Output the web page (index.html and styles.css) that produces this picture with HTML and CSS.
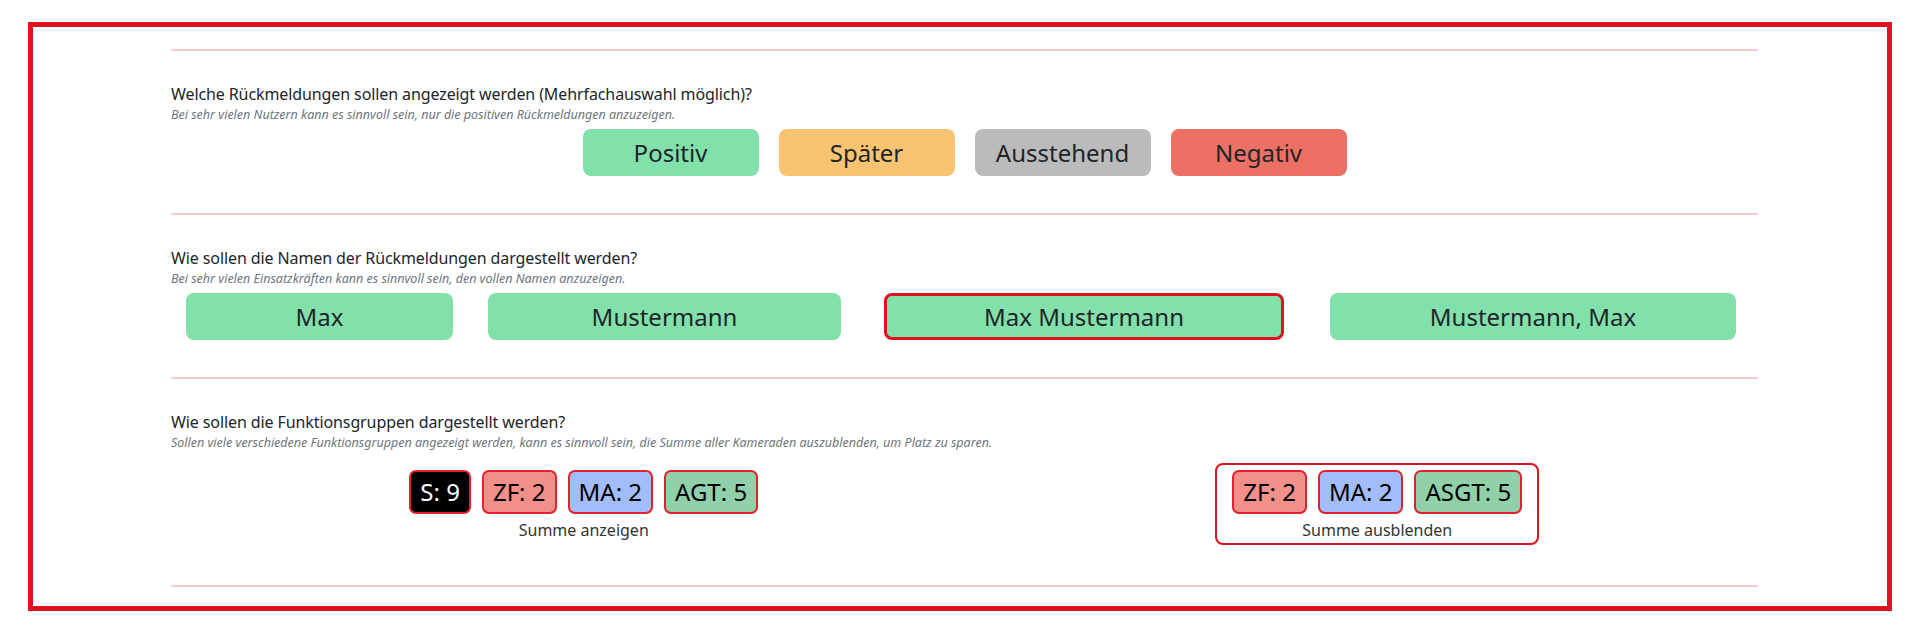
FILE: index.html
```html
<!DOCTYPE html>
<html lang="de">
<head>
  <meta charset="UTF-8">
  <title>Anzeige-Einstellungen</title>
  <link rel="stylesheet" href="styles.css">
</head>

<body>
  <div class="panel">
    <hr class="rule">

    <!-- Welche Rückmeldungen -->
    <section class="option">
      <p class="question">Welche Rückmeldungen sollen angezeigt werden (Mehrfachauswahl möglich)?</p>
      <p class="hint">Bei sehr vielen Nutzern kann es sinnvoll sein, nur die positiven Rückmeldungen anzuzeigen.</p>
      <div class="status-row">
        <button class="btn btn-positive">Positiv</button>
        <button class="btn btn-later">Später</button>
        <button class="btn btn-pending">Ausstehend</button>
        <button class="btn btn-negative">Negativ</button>
      </div>
    </section>

    <hr class="rule">

    <!-- Namensdarstellung -->
    <section class="option">
      <p class="question">Wie sollen die Namen der Rückmeldungen dargestellt werden?</p>
      <p class="hint">Bei sehr vielen Einsatzkräften kann es sinnvoll sein, den vollen Namen anzuzeigen.</p>
      <div class="name-row">
        <button class="btn btn-positive name-first">Max</button>
        <button class="btn btn-positive name-last">Mustermann</button>
        <button class="btn btn-positive name-full selected">Max Mustermann</button>
        <button class="btn btn-positive name-rev">Mustermann, Max</button>
      </div>
    </section>

    <hr class="rule">

    <!-- Funktionsgruppen -->
    <section class="option option-last">
      <p class="question">Wie sollen die Funktionsgruppen dargestellt werden?</p>
      <p class="hint">Sollen viele verschiedene Funktionsgruppen angezeigt werden, kann es sinnvoll sein, die Summe aller Kameraden auszublenden, um Platz zu sparen.</p>
      <div class="group-row">
        <div class="group-cell">
          <div class="group">
            <div class="chips">
              <span class="chip chip-sum">S: 9</span>
              <span class="chip chip-zf">ZF: 2</span>
              <span class="chip chip-ma">MA: 2</span>
              <span class="chip chip-agt">AGT: 5</span>
            </div>
            <span class="group-label">Summe anzeigen</span>
          </div>
        </div>
        <div class="group-cell">
          <div class="group selected">
            <div class="chips">
              <span class="chip chip-zf">ZF: 2</span>
              <span class="chip chip-ma">MA: 2</span>
              <span class="chip chip-agt">ASGT: 5</span>
            </div>
            <span class="group-label">Summe ausblenden</span>
          </div>
        </div>
      </div>
    </section>

    <hr class="rule">
  </div>
</body>
</html>
```

FILE: styles.css
```css
body {
  margin: 0;
  font-family: "Noto Sans", "Open Sans", sans-serif;
  color: #212529;
  background-color: white;
}
.panel {
  margin: 22px 28px;
  border: 5px solid #e0121f;
  padding: 22px 129px 19px 138px;
}
.rule {
  border: none;
  height: 2px;
  margin: 0;
  background-color: #f8cbce;
}
.option {
  padding: 31px 0 37px;
}
.option-last {
  padding-bottom: 40px;
}
.question {
  margin: 0;
  font-size: 16px;
  line-height: 24px;
  letter-spacing: -0.1px;
}
.hint {
  margin: 0;
  font-size: 12.5px;
  line-height: 18px;
  font-style: italic;
  color: #6c757d;
}
.btn {
  font-family: inherit;
  font-size: 24px;
  line-height: 47px;
  height: 47px;
  padding: 0;
  border: none;
  border-radius: 8px;
  color: #212529;
  cursor: pointer;
}
.btn-positive {
  background-color: #82e0aa;
}
.btn-later {
  background-color: #f8c471;
}
.btn-pending {
  background-color: #bbbbbb;
}
.btn-negative {
  background-color: #ec7063;
}
.btn.selected {
  border: 3px solid #e0121f;
  line-height: 41px;
}
.status-row {
  display: flex;
  justify-content: center;
  gap: 20px;
  margin-top: 5px;
}
.status-row .btn {
  width: 176px;
}
.name-row {
  display: flex;
  margin-top: 5px;
  padding-left: 15px;
}
.name-first {
  width: 267px;
}
.name-last {
  width: 353px;
  margin-left: 35px;
}
.name-full {
  width: 400px;
  margin-left: 43px;
}
.name-rev {
  width: 406px;
  margin-left: 46px;
}
.group-row {
  display: grid;
  grid-template-columns: 1fr 1fr;
  margin: 11px -16px 0 16px;
}
.group-cell {
  display: flex;
  justify-content: center;
}
.group {
  display: flex;
  flex-direction: column;
  align-items: center;
  border: 2px solid transparent;
  border-radius: 8px;
  padding: 5px 15px 2px;
}
.group.selected {
  border-color: #e0121f;
}
.chips {
  display: flex;
  gap: 11px;
}
.chip {
  font-size: 24px;
  line-height: 40px;
  padding: 0 9px;
  border: 2px solid #e3202d;
  border-radius: 7px;
  color: black;
}
.chip-sum {
  background-color: black;
  color: white;
}
.chip-zf {
  background-color: #f1908a;
}
.chip-ma {
  background-color: #a3bcfa;
}
.chip-agt {
  background-color: #90d1a9;
}
.group-label {
  margin-top: 5px;
  font-size: 16px;
  line-height: 22px;
  color: #333;
}
```
